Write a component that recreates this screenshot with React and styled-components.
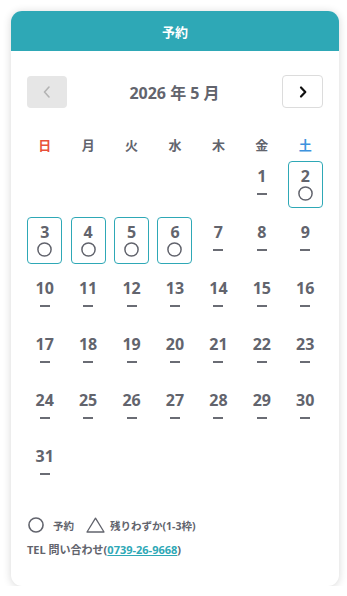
import styled, { createGlobalStyle } from "styled-components";

const GlobalStyle = createGlobalStyle`
  body {
    margin: 0;
    background: #fff;
    font-family: "Open Sans", "Noto Sans CJK JP", sans-serif;
  }
`;

const Card = styled.div`
  width: 328px;
  margin: 11px 0 0 11px;
  background: #fff;
  border-radius: 11px;
  overflow: hidden;
  box-shadow: 0 1px 8px rgba(0, 0, 0, 0.16);
`;

const Header = styled.div`
  height: 40px;
  background: #2ea8b6;
  color: #fff;
  font-size: 13px;
  font-weight: 700;
  display: flex;
  align-items: center;
  justify-content: center;
`;

const Body = styled.div`
  padding: 24px 12px 29px;
`;

const Nav = styled.div`
  display: flex;
  align-items: center;
  justify-content: space-between;
  margin: 0 4px;
`;

const NavButton = styled.button`
  width: ${(p) => (p.$disabled ? "40px" : "41px")};
  height: ${(p) => (p.$disabled ? "32px" : "33px")};
  box-sizing: border-box;
  border-radius: 4px;
  border: ${(p) => (p.$disabled ? "none" : "1px solid #dcdcdc")};
  background: ${(p) => (p.$disabled ? "#e6e6e6" : "#fff")};
  display: flex;
  align-items: center;
  justify-content: center;
  padding: 0;
  margin-top: ${(p) => (p.$disabled ? "1px" : "0")};
`;

const MonthTitle = styled.div`
  font-size: 16px;
  font-weight: 700;
  color: #62646d;
`;

const Weekdays = styled.div`
  display: grid;
  grid-template-columns: repeat(7, 1fr);
  margin-top: 26px;
  height: 20px;
  align-items: center;
`;

const Weekday = styled.div`
  text-align: center;
  font-size: 13px;
  font-weight: 700;
  color: ${(p) => p.$color};
`;

const Days = styled.div`
  display: grid;
  grid-template-columns: repeat(7, 1fr);
  row-gap: 9px;
  margin-top: 7px;
`;

const Day = styled.div`
  justify-self: center;
  width: 35px;
  height: 47px;
  box-sizing: border-box;
  border: 1px solid ${(p) => (p.$open ? "#2ea8b6" : "transparent")};
  border-radius: 4px;
  display: flex;
  flex-direction: column;
  align-items: center;
  padding-top: 5px;
`;

const DayNum = styled.span`
  font-size: 16px;
  font-weight: 700;
  line-height: 18px;
  color: #62646d;
`;

const Mark = styled.div`
  height: 15px;
  margin-top: 1px;
  display: flex;
  align-items: center;
  justify-content: center;
`;

const Dash = styled.span`
  width: 10px;
  height: 2px;
  background: #6a6c74;
`;

const Legend = styled.div`
  display: flex;
  align-items: center;
  margin-top: 29px;
  padding-left: 5px;
  font-size: 10.5px;
  font-weight: 700;
  color: #62646d;
`;

const LegendItem = styled.span`
  display: flex;
  align-items: center;
  gap: 9px;
  margin-right: 12px;

  & + & {
    gap: 5px;
  }
`;

const Tel = styled.div`
  margin-top: 8px;
  padding-left: 4px;
  font-size: 11px;
  font-weight: 700;
  color: #62646d;

  a {
    color: #2ea8b6;
    text-decoration: underline;
  }
`;

const Circle = ({ size = 15 }) => (
  <svg width={size} height={size} viewBox="0 0 15 15">
    <circle cx="7.5" cy="7.5" r="6.6" fill="none" stroke="#62646d" strokeWidth="1.5" />
  </svg>
);

const Triangle = () => (
  <svg width="19" height="16" viewBox="0 0 19 16">
    <polygon points="9.5,1.2 18,15 1,15" fill="none" stroke="#62646d" strokeWidth="1.3" strokeLinejoin="round" />
  </svg>
);

const weekdays = [
  { label: "日", color: "#e8503a" },
  { label: "月", color: "#62646d" },
  { label: "火", color: "#62646d" },
  { label: "水", color: "#62646d" },
  { label: "木", color: "#62646d" },
  { label: "金", color: "#62646d" },
  { label: "土", color: "#3e93de" },
];

const openDays = [2, 3, 4, 5, 6];
const firstOffset = 5;

export default function App() {
  const cells = [];
  for (let i = 0; i < firstOffset; i++) cells.push(null);
  for (let d = 1; d <= 31; d++) cells.push(d);

  return (
    <>
      <GlobalStyle />
      <Card>
        <Header>予約</Header>
        <Body>
          <Nav>
            <NavButton $disabled>
              <svg width="10" height="14" viewBox="0 0 10 14">
                <polyline points="7,2 2.5,7 7,12" fill="none" stroke="#b3b3b3" strokeWidth="1.6" strokeLinecap="round" strokeLinejoin="round" />
              </svg>
            </NavButton>
            <MonthTitle>2026 年 5 月</MonthTitle>
            <NavButton>
              <svg width="10" height="14" viewBox="0 0 10 14">
                <polyline points="3,2.5 7.3,7 3,11.5" fill="none" stroke="#111" strokeWidth="2.2" strokeLinecap="round" strokeLinejoin="round" />
              </svg>
            </NavButton>
          </Nav>
          <Weekdays>
            {weekdays.map((w) => (
              <Weekday key={w.label} $color={w.color}>{w.label}</Weekday>
            ))}
          </Weekdays>
          <Days>
            {cells.map((d, i) =>
              d === null ? (
                <div key={"e" + i} />
              ) : (
                <Day key={d} $open={openDays.includes(d)}>
                  <DayNum>{d}</DayNum>
                  <Mark>{openDays.includes(d) ? <Circle size={15} /> : <Dash />}</Mark>
                </Day>
              )
            )}
          </Days>
          <Legend>
            <LegendItem><Circle size={16} />予約</LegendItem>
            <LegendItem><Triangle />残りわずか(1-3枠)</LegendItem>
          </Legend>
          <Tel>
            TEL 問い合わせ(<a href="#">0739-26-9668</a>)
          </Tel>
        </Body>
      </Card>
    </>
  );
}
